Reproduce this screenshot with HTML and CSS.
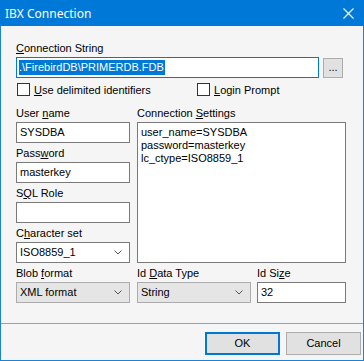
FILE: index.html
```html
<!DOCTYPE html>
<html lang="en">
<head>
    <meta charset="UTF-8">
    <title>IBX Connection</title>
    <link rel="stylesheet" href="styles.css">
</head>
<body>
    <div class="window">
        <div class="titlebar">
            <span class="title">IBX Connection</span>
            <svg class="close" width="11" height="11" viewBox="0 0 11 11">
                <path d="M0.5 0.5 L10.5 10.5 M10.5 0.5 L0.5 10.5" stroke="#fff" stroke-width="1.1" fill="none"/>
            </svg>
        </div>

        <div class="client">
            <div class="content">
                <label class="lbl"><u>C</u>onnection String</label>
                <div class="conn-row">
                    <div class="edit conn-edit focused"><span class="sel">.\FirebirdDB\PRIMERDB.FDB</span></div>
                    <div class="btn small-btn">...</div>
                </div>

                <div class="checks">
                    <div class="check check-first"><span class="box"></span><span><u>U</u>se delimited identifiers</span></div>
                    <div class="check"><span class="box"></span><span><u>L</u>ogin Prompt</span></div>
                </div>

                <div class="fields">
                    <div class="field">
                        <label class="lbl">User <u>n</u>ame</label>
                        <div class="edit">SYSDBA</div>
                    </div>
                    <div class="field settings">
                        <label class="lbl">Connection <u>S</u>ettings</label>
                        <div class="memo">user_name=SYSDBA<br>password=masterkey<br>lc_ctype=ISO8859_1</div>
                    </div>
                    <div class="field">
                        <label class="lbl">Pass<u>w</u>ord</label>
                        <div class="edit">masterkey</div>
                    </div>
                    <div class="field">
                        <label class="lbl">S<u>Q</u>L Role</label>
                        <div class="edit"></div>
                    </div>
                    <div class="field">
                        <label class="lbl">C<u>h</u>aracter set</label>
                        <div class="combo">ISO8859_1
                            <svg class="arrow" width="8" height="5" viewBox="0 0 8 5"><path d="M0.5 0.5 L4 4 L7.5 0.5" stroke="#555" fill="none"/></svg>
                        </div>
                    </div>
                    <div class="field">
                        <label class="lbl">Blob <u>f</u>ormat</label>
                        <div class="combo grey">XML format
                            <svg class="arrow" width="8" height="5" viewBox="0 0 8 5"><path d="M0.5 0.5 L4 4 L7.5 0.5" stroke="#555" fill="none"/></svg>
                        </div>
                    </div>
                    <div class="field">
                        <label class="lbl">Id <u>D</u>ata Type</label>
                        <div class="combo grey">String
                            <svg class="arrow" width="8" height="5" viewBox="0 0 8 5"><path d="M0.5 0.5 L4 4 L7.5 0.5" stroke="#555" fill="none"/></svg>
                        </div>
                    </div>
                    <div class="field">
                        <label class="lbl">Id Si<u>z</u>e</label>
                        <div class="edit">32</div>
                    </div>
                </div>
            </div>

            <div class="separator"></div>

            <div class="buttons">
                <div class="btn default-btn">OK</div>
                <div class="btn">Cancel</div>
            </div>
        </div>
    </div>
</body>
</html>
```

FILE: styles.css
```css
body {
    margin: 0;
    font-family: "Liberation Sans", Arial, sans-serif;
    font-size: 11px;
    color: #000;
}
.window {
    width: 364px;
    height: 361px;
    box-sizing: border-box;
    background: #f5f5f5;
    border: 1px solid #1883d7;
    border-top: none;
    display: flex;
    flex-direction: column;
}
.titlebar {
    height: 26px;
    margin: 0 -1px;
    background: #0078d7; /* windows accent */
    color: #fff;
    display: flex;
    align-items: center;
    justify-content: space-between;
    padding: 0 10px 0 5px;
    flex-shrink: 0;
}
.title {
    font-family: "Noto Sans", sans-serif;
    font-size: 12px;
}
.close {
    margin-top: 1px;
}
.client {
    flex: 1;
    display: flex;
    flex-direction: column;
}
.content {
    padding: 16px 0 0 15px;
}
.lbl {
    display: block;
    height: 13px;
    line-height: 13px;
    margin-bottom: 2px;
    white-space: nowrap;
}
.conn-row {
    display: flex;
    align-items: flex-end;
    gap: 4px;
}
.edit, .combo, .memo {
    box-sizing: border-box;
    height: 21px;
    border: 1px solid #7a7a7a;
    background: #fff;
    line-height: 19px;
    padding: 0 3px;
    white-space: nowrap;
}
.conn-edit {
    width: 303px;
    padding-left: 2px;
}
.focused {
    border-color: #0078d7;
}
.sel {
    background: #0078d7;
    color: #fff;
    display: inline-block;
    line-height: 15px;
    padding-right: 1px;
}
.btn {
    box-sizing: border-box;
    width: 75px;
    height: 23px;
    background: #e1e1e1;
    border: 1px solid #adadad;
    text-align: center;
    line-height: 21px;
}
.small-btn {
    width: 20px;
    height: 20px;
    line-height: 16px;
}
.default-btn {
    border: 2px solid #0078d7;
    line-height: 19px;
}
.checks {
    display: flex;
    margin-top: 4px;
    height: 15px;
    align-items: center;
}
.check {
    display: flex;
    align-items: center;
    gap: 4px;
}
.check-first {
    width: 180px;
    padding-left: 1px;
}
.box {
    width: 13px;
    height: 13px;
    box-sizing: border-box;
    border: 1px solid #333;
    background: #fff;
}
.fields {
    margin-top: 10px;
    display: grid;
    grid-template-columns: 115px 114px 89px;
    grid-auto-rows: 40px;
    column-gap: 6px;
}
.field {
    display: flex;
    flex-direction: column;
    padding-bottom: 4px;
    width: 114px;
}
.field:last-child {
    width: 89px;
}
.settings {
    grid-column: 2 / span 2;
    grid-row: 1 / span 4;
    width: auto;
}
.memo {
    flex: 1;
    height: auto;
    line-height: 13px;
    padding: 3px 3px;
}
.combo {
    display: flex;
    align-items: center;
    justify-content: space-between;
    padding-right: 7px;
}
.combo.grey {
    background: #e5e5e5;
    border-color: #acacac;
}
.separator {
    margin-top: 16px;
    height: 1px;
    background: #a0a0a0;
}
.buttons {
    display: flex;
    justify-content: flex-end;
    gap: 6px;
    margin-top: 8px;
    padding-right: 2px;
}
```
